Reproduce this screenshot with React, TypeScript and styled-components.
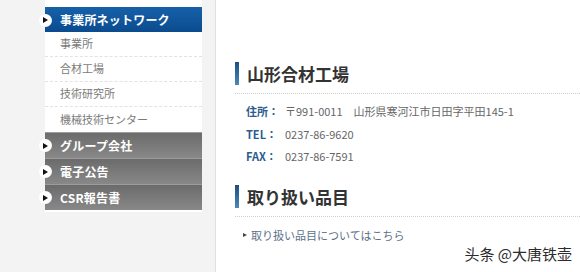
import React from "react";
import styled, { createGlobalStyle } from "styled-components";

const Global = createGlobalStyle`
  html, body { margin: 0; padding: 0; background: #fff; }
  body { font-family: "Noto Sans CJK JP", "Noto Sans", sans-serif; }
`;

const Page = styled.div`
  position: relative;
  display: flex;
  width: 580px;
  height: 272px;
  overflow: hidden;
`;

const Sidebar = styled.aside`
  width: 216px;
  flex: 0 0 216px;
  box-sizing: border-box;
  background: #f3f3f3;
  border-right: 1px solid #e0e0e0;
  padding-left: 45px;
  padding-right: 14px;
`;

const Menu = styled.div`
  width: 157px;
  background: #fff;
  padding-top: 7px;
  padding-bottom: 2px;
`;

const Bullet = styled.span`
  position: absolute;
  left: -6px;
  top: 50%;
  width: 13px;
  height: 13px;
  margin-top: -6.5px;
  border-radius: 50%;
  background: #fff;
  &::after {
    content: "";
    position: absolute;
    left: 4px;
    top: 3.5px;
    border-left: 5px solid #111;
    border-top: 3px solid transparent;
    border-bottom: 3px solid transparent;
  }
`;

const MainItem = styled.div<{ $active?: boolean }>`
  position: relative;
  height: ${(p) => (p.$active ? "25px" : "26px")};
  box-sizing: border-box;
  display: flex;
  align-items: center;
  padding-left: 15px;
  padding-bottom: 1px;
  color: #fff;
  font-weight: 700;
  font-size: 12px;
  letter-spacing: 0.2px;
  background: ${(p) =>
    p.$active
      ? "linear-gradient(to bottom, #1660a8, #0b4b8e)"
      : "linear-gradient(to bottom, #6b6b6b, #888888)"};
  border-top: 1px solid ${(p) => (p.$active ? "#1660a8" : "#9c9c9c")};
`;

const SubItem = styled.div`
  height: 25px;
  box-sizing: border-box;
  display: flex;
  align-items: center;
  padding-left: 15px;
  padding-bottom: 2px;
  font-size: 11px;
  color: #7a7a7a;
  border-bottom: 1px dashed #e2e2e2;
  &:last-child { border-bottom: none; }
`;

const Main = styled.main`
  flex: 1;
  padding: 62px 0 0 19px;
  background: #fff;
`;

const Section = styled.section`
  & + & { margin-top: 19px; }
`;

const Heading = styled.h2`
  margin: 0;
  display: flex;
  align-items: flex-start;
  height: 31px;
  border-bottom: 1px dotted #cfcfcf;
  font-size: 17px;
  font-weight: 700;
  color: #333;
  &::before {
    content: "";
    display: block;
    width: 4px;
    height: 23px;
    margin-right: 8px;
    background: linear-gradient(to bottom, #1b4f80, #4c88bd);
  }
  & > span { line-height: 23px; }
`;

const InfoList = styled.dl`
  margin: 9px 0 0 11px;
  display: grid;
  grid-template-columns: 39px auto;
  row-gap: 5px;
  font-size: 11px;
  line-height: 17.5px;
`;

const Label = styled.dt`
  color: #2b5c8e;
  font-weight: 700;
`;

const Value = styled.dd`
  margin: 0;
  color: #666;
`;

const LinkLine = styled.a`
  display: flex;
  align-items: center;
  margin: 10px 0 0 8px;
  font-size: 11px;
  color: #5d7188;
  text-decoration: none;
  &::before {
    content: "";
    display: block;
    margin-right: 4px;
    border-left: 4px solid #444;
    border-top: 2.5px solid transparent;
    border-bottom: 2.5px solid transparent;
  }
`;

const Watermark = styled.div`
  position: absolute;
  right: 8px;
  bottom: 8px;
  font-family: "Noto Sans CJK SC", sans-serif;
  font-size: 15px;
  color: #2b2b2b;
  text-shadow: 0 0 2px #fff;
`;

export default function App() {
  return (
    <Page>
      <Global />
      <Sidebar>
        <Menu>
          <MainItem $active>
            <Bullet />
            事業所ネットワーク
          </MainItem>
          <div>
            {["事業所", "合材工場", "技術研究所", "機械技術センター"].map((t) => (
              <SubItem key={t}>{t}</SubItem>
            ))}
          </div>
          {["グループ会社", "電子公告", "CSR報告書"].map((t) => (
            <MainItem key={t}>
              <Bullet />
              {t}
            </MainItem>
          ))}
        </Menu>
      </Sidebar>
      <Main>
        <Section>
          <Heading>
            <span>山形合材工場</span>
          </Heading>
          <InfoList>
            <Label>住所：</Label>
            <Value>〒991-0011　山形県寒河江市日田字平田145-1</Value>
            <Label>TEL：</Label>
            <Value>0237-86-9620</Value>
            <Label>FAX：</Label>
            <Value>0237-86-7591</Value>
          </InfoList>
        </Section>
        <Section>
          <Heading>
            <span>取り扱い品目</span>
          </Heading>
          <LinkLine href="#">取り扱い品目についてはこちら</LinkLine>
        </Section>
      </Main>
      <Watermark>头条 @大唐铁壶</Watermark>
    </Page>
  );
}
